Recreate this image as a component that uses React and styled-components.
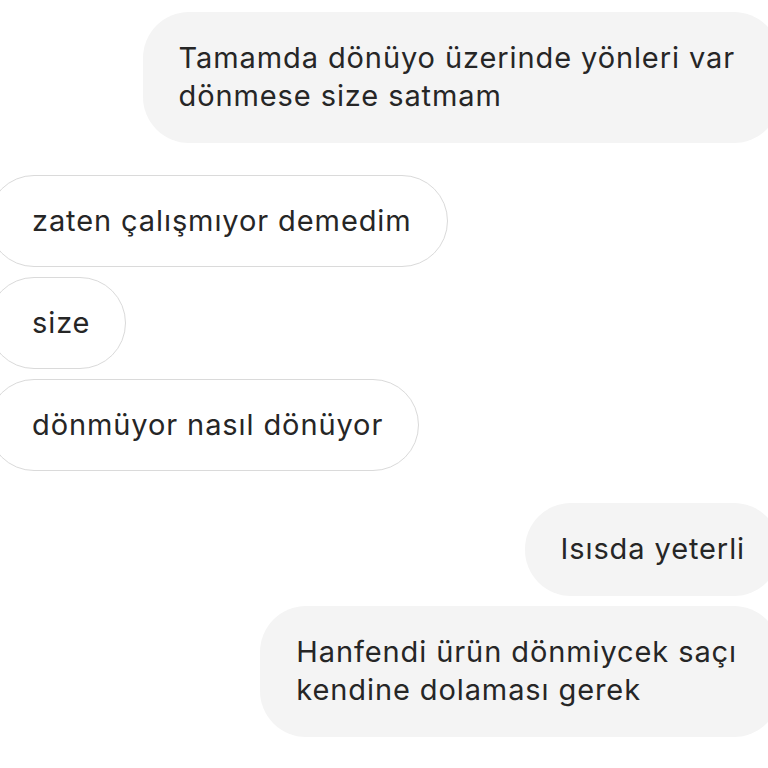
import React from "react";
import styled, { createGlobalStyle } from "styled-components";

const Global = createGlobalStyle`
  html, body { margin: 0; padding: 0; background: #ffffff; }
  body { font-family: Inter, "Noto Sans", sans-serif; overflow: hidden; }
`;

const Thread = styled.div`
  width: 768px;
  height: 768px;
  overflow: hidden;
  display: flex;
  flex-direction: column;
  padding-top: 12px;
  box-sizing: border-box;
`;

const Group = styled.div`
  display: flex;
  flex-direction: column;
  align-items: ${(p) => (p.$mine ? "flex-end" : "flex-start")};
  gap: 10px;
  margin-bottom: 32px;
`;

const Bubble = styled.div`
  box-sizing: border-box;
  padding-top: ${(p) => (p.$mine ? "27px" : "26px")};
  padding-bottom: ${(p) => (p.$mine ? "28px" : "26px")};
  padding-left: ${(p) => (p.$mine ? "36px" : "43px")};
  padding-right: ${(p) => 35 + (p.$trail || 0)}px;
  font-size: 29px;
  line-height: 38px;
  color: #262626;
  letter-spacing: 0.9px;
  white-space: nowrap;
  border-radius: 46px;
  background: ${(p) => (p.$mine ? "#f4f4f4" : "#ffffff")};
  border: ${(p) => (p.$mine ? "none" : "1px solid #dadada")};
  margin-left: ${(p) => (p.$mine ? "0" : "-12px")};
  margin-right: ${(p) => (p.$mine ? "-12px" : "0")};
`;

export default function App() {
  return (
    <>
      <Global />
      <Thread>
        <Group $mine>
          <Bubble $mine $trail={10}>
            Tamamda dönüyo üzerinde yönleri var
            <br />
            dönmese size satmam
          </Bubble>
        </Group>
        <Group>
          <Bubble>zaten çalışmıyor demedim</Bubble>
          <Bubble>size</Bubble>
          <Bubble>dönmüyor nasıl dönüyor</Bubble>
        </Group>
        <Group $mine>
          <Bubble $mine>Isısda yeterli</Bubble>
          <Bubble $mine $trail={8}>
            Hanfendi ürün dönmiycek saçı
            <br />
            kendine dolaması gerek
          </Bubble>
        </Group>
      </Thread>
    </>
  );
}
